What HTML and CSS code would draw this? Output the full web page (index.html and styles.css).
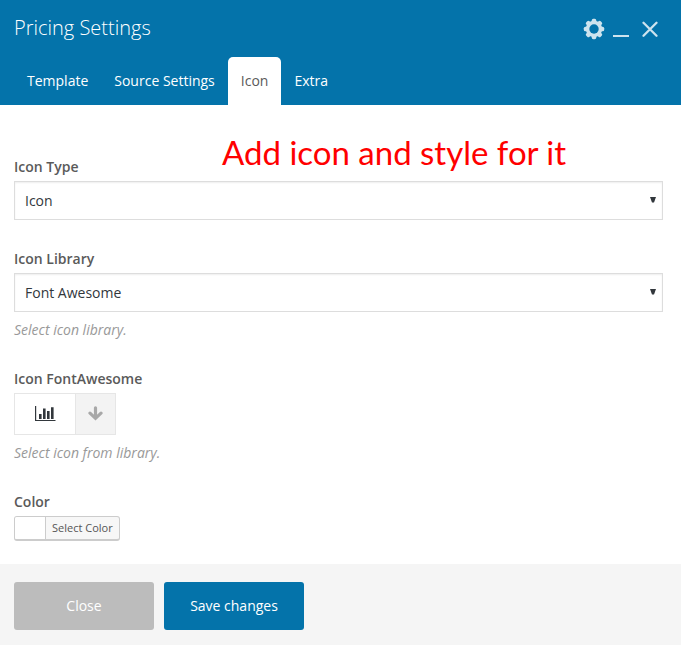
FILE: index.html
```html
<!DOCTYPE html>
<html lang="en">
<head>
<meta charset="utf-8">
<title>Pricing Settings</title>
<link rel="stylesheet" href="styles.css">
</head>
<body>
<div class="panel">
  <header class="header">
    <div class="titlebar">
      <h1 class="title">Pricing Settings</h1>
      <div class="controls">
        <svg class="gear" width="22" height="22" viewBox="-11 -11 22 22"><g fill="#cde3ee"><rect x="-2.3" y="-10.2" width="4.6" height="20.4" rx="1.6"/><rect x="-2.3" y="-10.2" width="4.6" height="20.4" rx="1.6" transform="rotate(45)"/><rect x="-2.3" y="-10.2" width="4.6" height="20.4" rx="1.6" transform="rotate(90)"/><rect x="-2.3" y="-10.2" width="4.6" height="20.4" rx="1.6" transform="rotate(135)"/><circle r="8.2"/></g><circle r="4.7" fill="#0473aa"/></svg>
        <svg class="minimize" width="16" height="22"><path d="M0 18h16" stroke="#cde3ee" stroke-width="2"/></svg>
        <svg class="close" width="16" height="22"><path d="M1.5 4.8l13 13m0-13l-13 13" stroke="#cde3ee" stroke-width="2.3" stroke-linecap="round"/></svg>
      </div>
    </div>
    <nav class="tabs">
      <a class="tab">Template</a>
      <a class="tab">Source Settings</a>
      <a class="tab active">Icon</a>
      <a class="tab">Extra</a>
    </nav>
  </header>
  <main class="content">
    <div class="annotation">Add icon and style for it</div>
    <section class="field type">
      <div class="label">Icon Type</div>
      <div class="select">Icon<svg width="6" height="6"><path d="M0 0h6L4 5.5H2z" fill="#32373c"/></svg></div>
    </section>
    <section class="field library">
      <div class="label">Icon Library</div>
      <div class="select">Font Awesome<svg width="6" height="6"><path d="M0 0h6L4 5.5H2z" fill="#32373c"/></svg></div>
      <div class="hint">Select icon library.</div>
    </section>
    <section class="field picker-field">
      <div class="label">Icon FontAwesome</div>
      <div class="picker">
        <div class="preview"><svg width="21" height="16"><path d="M.6 0v14.5H20.5" fill="none" stroke="#32373c" stroke-width="1.2"/><path d="M4 8h2.6v5H4zM8 2.5h2.6V13H8zM12 5h2.6v8H12zM16 1.2h2.6V13H16z" fill="#32373c"/></svg></div>
        <div class="toggle"><svg width="15" height="15"><path d="M7.5 1.8v10M2 7.2l5.5 5.1L13 7.2" fill="none" stroke="#a8a8a8" stroke-width="3.2" stroke-linecap="round"/></svg></div>
      </div>
      <div class="hint">Select icon from library.</div>
    </section>
    <section class="field color-field">
      <div class="label">Color</div>
      <div class="color"><span class="swatch"></span><span class="color-text">Select Color</span></div>
    </section>
  </main>
  <footer class="footer">
    <div class="button secondary">Close</div>
    <div class="button primary">Save changes</div>
  </footer>
</div>
</body>
</html>
```
FILE: styles.css
```css
* { box-sizing: border-box; }
body { margin: 0; font-family: "Open Sans", sans-serif; font-size: 14px; color: #32373c; background: #fff; }
svg { display: block; }
.panel { height: 645px; display: flex; flex-direction: column; overflow: hidden; }
.header { height: 105px; background: #0473aa; color: #fff; }
.titlebar { height: 57px; padding: 0 23px 0 14px; display: flex; justify-content: space-between; }
.title { margin: 0; font-size: 20px; line-height: 56px; font-weight: 300; }
.controls { display: flex; padding-top: 18px; }
.minimize { margin-left: 8px; }
.close { margin-left: 13px; }
.tabs { display: flex; height: 48px; padding-left: 14px; }
.tab { padding: 0 13px; line-height: 48px; }
.tab.active { background: #fff; color: #5a5a5a; border-radius: 5px 5px 0 0; }
.content { position: relative; height: 459px; padding: 52px 18px 0 14px; }
.annotation { position: absolute; left: 222px; top: 26px; font: 33px/42px Lato, sans-serif; color: #f00; white-space: nowrap; }
.label { height: 24px; line-height: 20px; font-weight: 600; color: #5a5a5a; }
.select { height: 39px; padding: 0 6px 0 10px; display: flex; justify-content: space-between; line-height: 37px; border: 1px solid #ddd; box-shadow: inset 0 1px 2px rgba(0,0,0,.07); }
.select svg { margin-top: 15px; }
.hint { font-style: italic; color: #999; line-height: 20px; padding-top: 8px; }
.type { height: 92px; }
.library { height: 120px; }
.picker-field { height: 123px; }
.picker { display: flex; width: 102px; height: 42px; border: 1px solid #e6e6e6; }
.preview { width: 61px; border-right: 1px solid #e6e6e6; padding: 12px 0 0 20px; }
.toggle { flex: 1; background: #f3f3f3; padding: 12px 0 0 12px; }
.color { display: flex; width: 106px; height: 25px; border: 1px solid #ccc; border-bottom-width: 2px; border-radius: 3px; background: #f7f7f7; overflow: hidden; }
.swatch { width: 31px; background: #fff; border-right: 1px solid #ccc; }
.color-text { padding-left: 6px; font-size: 11px; line-height: 22px; color: #555; white-space: nowrap; }
.footer { height: 81px; background: #f5f5f5; padding: 18px 14px; display: flex; gap: 10px; }
.button { width: 140px; height: 48px; line-height: 48px; border-radius: 3px; text-align: center; color: #fff; }
.primary { background: #0473aa; }
.secondary { background: #bcbcbc; }
```
